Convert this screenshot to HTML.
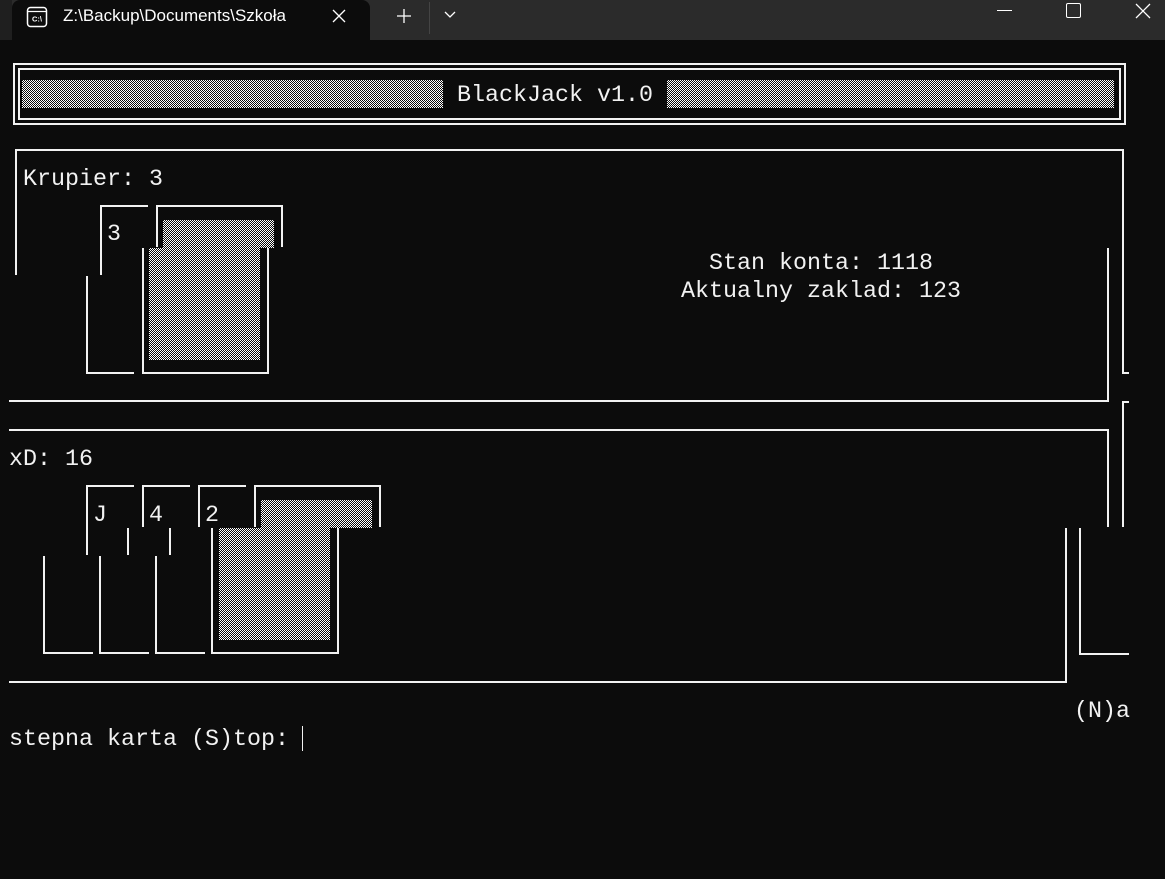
<!DOCTYPE html>
<html><head><meta charset="utf-8"><style>
*{margin:0;padding:0;box-sizing:border-box}
body{width:1165px;height:879px;background:#0c0c0c;position:relative;overflow:hidden;font-family:"Liberation Mono",monospace;color:#f2f2f2}
.h,.v{position:absolute;background:#f2f2f2}
.h{height:2px}.v{width:2px}
.s{position:absolute;background:repeating-conic-gradient(#ffffff 0 25%,#0c0c0c 0 50%) 0 0/2px 2px}
.t{position:absolute;font-size:23.33px;line-height:28px;white-space:pre;margin-top:2px}
#bar{position:absolute;left:0;top:0;width:1165px;height:40px;background:#2b2b2b}
#tab{position:absolute;left:12px;top:0;width:358px;height:40px;background:#0c0c0c;border-radius:8px 8px 0 0}
.ui{position:absolute;font-family:"Liberation Sans",sans-serif;color:#fff}
</style></head><body>
<div id="bar"></div>
<div style="position:absolute;left:0;top:0;width:12px;height:40px;background:#1f1f1f"></div>
<div id="tab"></div>
<svg style="position:absolute;left:26px;top:6px" width="22" height="22" viewBox="0 0 22 22"><rect x="1.5" y="1.5" width="19" height="19" rx="3" fill="none" stroke="#fff" stroke-width="1.5"/><line x1="2" y1="5.5" x2="20" y2="5.5" stroke="#fff" stroke-width="1.2"/><text x="11" y="15.5" font-size="7.5" font-family="Liberation Sans" fill="#fff" text-anchor="middle" font-weight="bold">C:\</text></svg>
<div class="ui" style="left:63px;top:6px;font-size:17px">Z:\Backup\Documents\Szkoła</div>
<svg style="position:absolute;left:332px;top:9px" width="14" height="14"><path d="M1 1L13 13M13 1L1 13" stroke="#fff" stroke-width="1.3"/></svg>
<svg style="position:absolute;left:396px;top:8px" width="16" height="16"><path d="M8 1V15M1 8H15" stroke="#fff" stroke-width="1.3"/></svg>
<div style="position:absolute;left:429px;top:2px;width:1px;height:32px;background:#444"></div>
<svg style="position:absolute;left:444px;top:11px" width="12" height="8"><path d="M1 1L6 6L11 1" stroke="#fff" stroke-width="1.3" fill="none"/></svg>
<div style="position:absolute;left:997px;top:10px;width:15px;height:1px;background:#fff"></div>
<div style="position:absolute;left:1066px;top:3px;width:15px;height:15px;border:1.3px solid #fff;border-radius:2px"></div>
<svg style="position:absolute;left:1135px;top:3px" width="16" height="16"><path d="M1 1L15 15M15 1L1 15" stroke="#fff" stroke-width="1.3"/></svg>

<div style="position:absolute;left:13px;top:63px;width:1113px;height:62px;border:2px solid #f2f2f2"></div>
<div style="position:absolute;left:18px;top:68px;width:1103px;height:52px;border:2px solid #f2f2f2"></div>
<div class="s" style="left:22px;top:80px;width:421px;height:28px"></div>
<div class="s" style="left:667px;top:80px;width:447px;height:28px"></div>
<div class="t" style="left:457px;top:80px">BlackJack v1.0</div>

<div class="h" style="left:15px;top:149px;width:1109px"></div>
<div class="v" style="left:15px;top:149px;height:126px"></div>
<div class="v" style="left:1122px;top:149px;height:225px"></div>
<div class="h" style="left:1122px;top:372px;width:7px"></div>
<div class="v" style="left:1107px;top:248px;height:154px"></div>
<div class="h" style="left:9px;top:400px;width:1100px"></div>
<div class="t" style="left:23px;top:164px">Krupier: 3</div>
<div class="t" style="left:709px;top:248px">Stan konta: 1118</div>
<div class="t" style="left:681px;top:276px">Aktualny zaklad: 123</div>
<div class="h" style="left:100px;top:205px;width:48px"></div>
<div class="v" style="left:100px;top:205px;height:70px"></div>
<div class="t" style="left:107px;top:219px">3</div>
<div class="v" style="left:86px;top:276px;height:98px"></div>
<div class="h" style="left:86px;top:372px;width:48px"></div>
<div class="h" style="left:156px;top:205px;width:127px"></div>
<div class="v" style="left:156px;top:205px;height:42px"></div>
<div class="v" style="left:281px;top:205px;height:42px"></div>
<div class="s" style="left:163px;top:220px;width:111px;height:28px"></div>
<div class="v" style="left:142px;top:248px;height:126px"></div>
<div class="v" style="left:267px;top:248px;height:126px"></div>
<div class="h" style="left:142px;top:372px;width:127px"></div>
<div class="s" style="left:149px;top:248px;width:111px;height:112px"></div>

<div class="v" style="left:1122px;top:401px;height:126px"></div>
<div class="h" style="left:1122px;top:401px;width:7px"></div>
<div class="h" style="left:9px;top:429px;width:1100px"></div>
<div class="v" style="left:1107px;top:429px;height:98px"></div>
<div class="v" style="left:1065px;top:528px;height:155px"></div>
<div class="h" style="left:9px;top:681px;width:1058px"></div>
<div class="v" style="left:1079px;top:528px;height:127px"></div>
<div class="h" style="left:1079px;top:653px;width:50px"></div>
<div class="t" style="left:9px;top:444px">xD: 16</div>
<div class="h" style="left:86px;top:485px;width:48px"></div>
<div class="v" style="left:86px;top:485px;height:70px"></div>
<div class="t" style="left:93px;top:500px">J</div>
<div class="h" style="left:142px;top:485px;width:48px"></div>
<div class="v" style="left:142px;top:485px;height:42px"></div>
<div class="t" style="left:149px;top:500px">4</div>
<div class="h" style="left:198px;top:485px;width:48px"></div>
<div class="v" style="left:198px;top:485px;height:42px"></div>
<div class="t" style="left:205px;top:500px">2</div>
<div class="h" style="left:254px;top:485px;width:127px"></div>
<div class="v" style="left:254px;top:485px;height:42px"></div>
<div class="v" style="left:379px;top:485px;height:42px"></div>
<div class="s" style="left:261px;top:500px;width:111px;height:28px"></div>
<div class="v" style="left:127px;top:528px;height:27px"></div>
<div class="v" style="left:169px;top:528px;height:27px"></div>
<div class="v" style="left:211px;top:528px;height:126px"></div>
<div class="v" style="left:337px;top:528px;height:126px"></div>
<div class="s" style="left:219px;top:528px;width:111px;height:112px"></div>
<div class="v" style="left:43px;top:556px;height:98px"></div>
<div class="v" style="left:99px;top:556px;height:98px"></div>
<div class="v" style="left:155px;top:556px;height:98px"></div>
<div class="h" style="left:43px;top:652px;width:50px"></div>
<div class="h" style="left:99px;top:652px;width:50px"></div>
<div class="h" style="left:155px;top:652px;width:50px"></div>
<div class="h" style="left:211px;top:652px;width:128px"></div>

<div class="t" style="left:1074px;top:696px">(N)a</div>
<div class="t" style="left:9px;top:724px">stepna karta (S)top: </div>
<div style="position:absolute;left:302px;top:726px;width:1px;height:25px;background:#f2f2f2"></div>
</body></html>
